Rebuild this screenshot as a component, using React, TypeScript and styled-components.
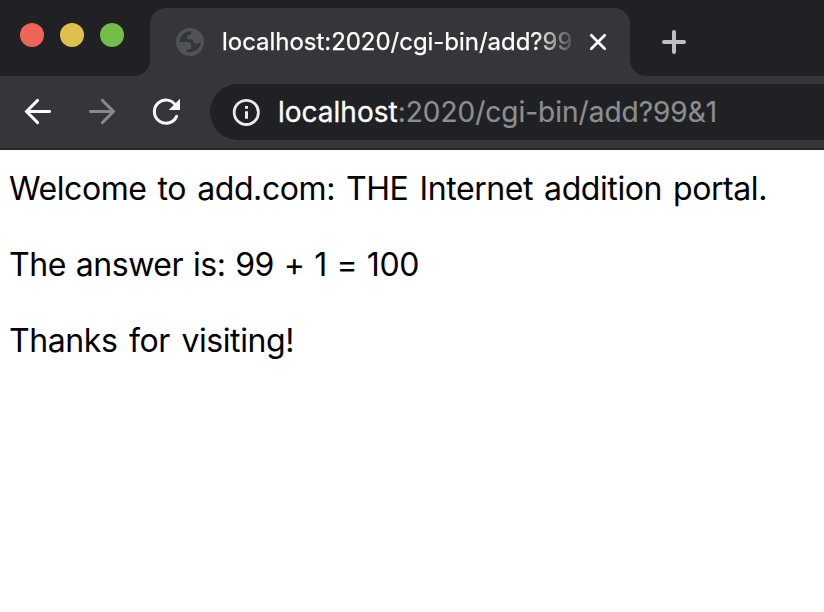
import React from 'react';
import styled, { createGlobalStyle } from 'styled-components';

const Global = createGlobalStyle`
  html, body { margin: 0; }
  body { background: #fff; font-family: Inter, "Liberation Sans", sans-serif; overflow: hidden; }
  * { box-sizing: border-box; }
`;

const Window = styled.div`
  width: 824px;
  height: 612px;
  display: flex;
  flex-direction: column;
  background: #fff;
`;

const TabStrip = styled.div`
  height: 76px;
  display: flex;
  align-items: flex-start;
  background: #202124;
`;

const Lights = styled.div`
  width: 134px;
  padding: 23px 0 0 20px;
  display: flex;
  gap: 16px;
`;

const Light = styled.span<{ $color: string }>`
  width: 24px;
  height: 24px;
  border-radius: 50%;
  background: ${(p) => p.$color};
`;

const Flare = styled.div<{ $side: 'left' | 'right' }>`
  width: 16px;
  height: 16px;
  align-self: flex-end;
  background: radial-gradient(
    circle at ${(p) => (p.$side === 'left' ? '0 0' : '100% 0')},
    transparent 15.5px,
    #35363a 16.3px
  );
`;

const Tab = styled.div`
  width: 480px;
  height: 68px;
  align-self: flex-end;
  display: flex;
  align-items: center;
  padding: 0 22px 0 26px;
  border-radius: 16px 16px 0 0;
  background: #35363a;
`;

const TabTitle = styled.div`
  width: 353px;
  margin-left: 18px;
  white-space: nowrap;
  color: #fff;
  font-size: 24px;
  line-height: 32px;
  letter-spacing: -0.03px;
  -webkit-text-stroke: 0.25px #fff;
  mask-image: linear-gradient(90deg, #000 312px, transparent 356px);
`;

const IconButton = styled.button`
  display: flex;
  padding: 0;
  border: 0;
  background: none;
`;

const CloseTab = styled(IconButton)`
  margin-left: 13px;
`;

const NewTab = styled(IconButton)`
  margin: 28px 0 0 14px;
`;

const Toolbar = styled.div`
  height: 74px;
  display: flex;
  align-items: flex-start;
  padding: 8px 0 0 22px;
  border-bottom: 2px solid #292a2b;
  background: #35363a;
`;

const Nav = styled.div`
  width: 188px;
  height: 56px;
  display: flex;
  align-items: center;
  gap: 32px;
`;

const Omnibox = styled.div`
  flex: 1;
  height: 56px;
  display: flex;
  align-items: center;
  padding-left: 20px;
  border-radius: 28px 0 0 28px;
  background: #202124;
`;

const Url = styled.div`
  margin-left: 16px;
  white-space: nowrap;
  color: #8d8e90;
  font-size: 28px;
  line-height: 36px;
  -webkit-text-stroke: 0.2px #8d8e90;
`;

const Host = styled.span`
  color: #fff;
  -webkit-text-stroke: 0.3px #fff;
`;

const Page = styled.main`
  padding: 20px 8px 0 9px;
`;

const Line = styled.p<{ $wordGap: number }>`
  margin: 0 0 38px;
  color: #000;
  font-size: 32px;
  line-height: 38px;
  letter-spacing: -0.42px;
  word-spacing: ${(p) => p.$wordGap}px;
  white-space: nowrap;
`;

const GlobeIcon = () => (
  <svg width="28" height="28" viewBox="0 0 28 28">
    <circle cx="14" cy="14" r="14" fill="#505357" />
    <path
      fill="#35363a"
      d="M3.4 14C3.4 8 8.5 3.2 15.3 3.3V5Q15.3 7 13 7Q11.5 7 11.5 9V11.3H15Q17.3 11.5 17.3 13.5Q17.3 15.5 19.5 15.5H21.5Q23 15.5 24.6 13.8C24.8 19.5 20.5 25 10.5 24.2V21.5H13Q15.3 21.5 15.3 19Q15.3 14 11.5 14Z"
    />
  </svg>
);

const CloseIcon = () => (
  <svg width="20" height="20" viewBox="0 0 20 20" stroke="#fff" strokeWidth="2.7" strokeLinecap="round">
    <path d="M3.3 3.3 16.7 16.7M16.7 3.3 3.3 16.7" />
  </svg>
);

const PlusIcon = () => (
  <svg width="28" height="28" viewBox="0 0 28 28" stroke="#bdc1c6" strokeWidth="4" strokeLinecap="round">
    <path d="M14 4V24M4 14H24" />
  </svg>
);

const BackIcon = () => (
  <svg width="32" height="32" viewBox="0 0 32 32" fill="none" stroke="#fff" strokeWidth="2.9" strokeLinecap="round">
    <path d="M5 15.5H27.6M15.6 4.4 4.5 15.5 15.6 26.6" />
  </svg>
);

const ForwardIcon = () => (
  <svg width="32" height="32" viewBox="0 0 32 32" fill="none" stroke="#88898b" strokeWidth="2.9" strokeLinecap="round">
    <path d="M4.4 15.5H27M16.4 4.4 27.5 15.5 16.4 26.6" />
  </svg>
);

const ReloadIcon = () => (
  <svg width="32" height="32" viewBox="0 0 32 32" fill="none">
    <path
      d="M25.6 9.2A11.6 11.6 0 1 0 26.6 20.3"
      stroke="#f5f6f6"
      strokeWidth="3"
      strokeLinecap="round"
    />
    <path d="M30 2.8V14H18.8Z" fill="#f5f6f6" />
  </svg>
);

const InfoIcon = () => (
  <svg width="32" height="32" viewBox="0 0 32 32" fill="none">
    <circle cx="16.3" cy="16.4" r="12.1" stroke="#e8eaed" strokeWidth="2.8" />
    <path d="M15 10h3v2.8h-3zM15 15.2h3v7.6h-3z" fill="#e8eaed" />
  </svg>
);

export default function App() {
  return (
    <Window>
      <Global />
      <TabStrip>
        <Lights>
          <Light $color="#ed6559" />
          <Light $color="#e0c04c" />
          <Light $color="#72be47" />
        </Lights>
        <Flare $side="left" />
        <Tab>
          <GlobeIcon />
          <TabTitle>localhost:2020/cgi-bin/add?99</TabTitle>
          <CloseTab aria-label="Close tab">
            <CloseIcon />
          </CloseTab>
        </Tab>
        <Flare $side="right" />
        <NewTab aria-label="New tab">
          <PlusIcon />
        </NewTab>
      </TabStrip>
      <Toolbar>
        <Nav>
          <IconButton aria-label="Back">
            <BackIcon />
          </IconButton>
          <IconButton aria-label="Forward">
            <ForwardIcon />
          </IconButton>
          <IconButton aria-label="Reload">
            <ReloadIcon />
          </IconButton>
        </Nav>
        <Omnibox>
          <InfoIcon />
          <Url>
            <Host>localhost</Host>:2020/cgi-bin/add?99&amp;1
          </Url>
        </Omnibox>
      </Toolbar>
      <Page>
        <Line $wordGap={2.5}>Welcome to add.com: THE Internet addition portal.</Line>
        <Line $wordGap={1.1}>The answer is: 99 + 1 = 100</Line>
        <Line $wordGap={3}>Thanks for visiting!</Line>
      </Page>
    </Window>
  );
}
